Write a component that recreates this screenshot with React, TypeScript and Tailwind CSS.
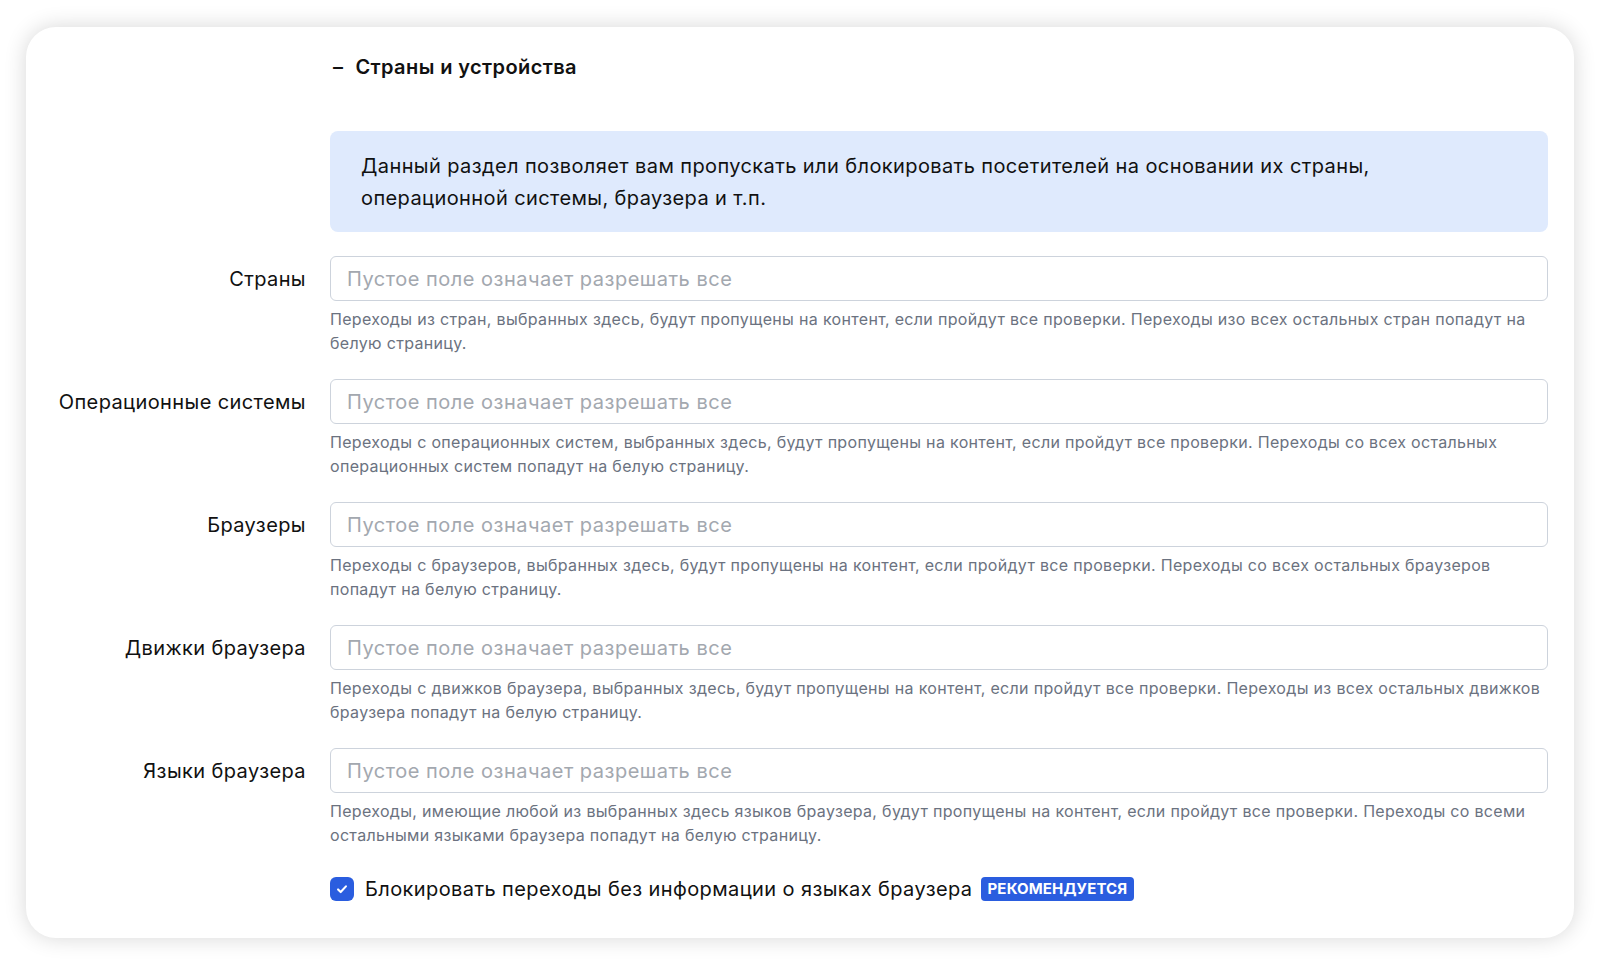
import React, { useState } from 'react';

const fields = [
  {
    label: 'Страны',
    help: 'Переходы из стран, выбранных здесь, будут пропущены на контент, если пройдут все проверки. Переходы изо всех остальных стран попадут на белую страницу.',
  },
  {
    label: 'Операционные системы',
    help: 'Переходы с операционных систем, выбранных здесь, будут пропущены на контент, если пройдут все проверки. Переходы со всех остальных операционных систем попадут на белую страницу.',
  },
  {
    label: 'Браузеры',
    help: 'Переходы с браузеров, выбранных здесь, будут пропущены на контент, если пройдут все проверки. Переходы со всех остальных браузеров попадут на белую страницу.',
  },
  {
    label: 'Движки браузера',
    help: 'Переходы с движков браузера, выбранных здесь, будут пропущены на контент, если пройдут все проверки. Переходы из всех остальных движков браузера попадут на белую страницу.',
  },
  {
    label: 'Языки браузера',
    help: 'Переходы, имеющие любой из выбранных здесь языков браузера, будут пропущены на контент, если пройдут все проверки. Переходы со всеми остальными языками браузера попадут на белую страницу.',
  },
];

const App: React.FC = () => {
  const [blockNoLang, setBlockNoLang] = useState(true);

  return (
    <div className="h-[966px] bg-white px-[26px] pt-[27px] font-['Inter',sans-serif] tracking-[0.025em] text-[#111]">
      <div className="rounded-[30px] bg-white pl-4 pr-[26px] pt-[26px] pb-[35px] shadow-[0_0_22px_rgba(0,0,0,0.16)]">
        <div className="grid grid-cols-[264px_1fr] gap-x-6">
          <div />
          <h2 className="flex items-center gap-3 text-[20px] font-semibold leading-7">
            <span className="pl-[3px]">–</span>
            <span>Страны и устройства</span>
          </h2>

          <div />
          <div className="mt-[50px] mb-6 rounded-lg bg-[#dfeafd] pl-[31px] pr-6 pt-[19px] pb-[18px] text-[20px] leading-8">
            Данный раздел позволяет вам пропускать или блокировать посетителей на основании их страны,
            <br />
            операционной системы, браузера и т.п.
          </div>

          {fields.map((f, i) => (
            <React.Fragment key={f.label}>
              <label className={`flex h-[45px] items-center justify-end text-[20px] ${i > 0 ? 'mt-6' : ''}`}>
                {f.label}
              </label>
              <div className={i > 0 ? 'mt-6' : ''}>
                <input
                  type="text"
                  placeholder="Пустое поле означает разрешать все"
                  className="h-[45px] w-full rounded-md border border-[#cdd3dc] px-4 text-[20px] tracking-[0.025em] outline-none placeholder:text-[#a3a8af]"
                />
                <p className="mt-1.5 text-[16px] leading-6 tracking-[0.02em] text-[#6b7280]">{f.help}</p>
              </div>
            </React.Fragment>
          ))}

          <div />
          <label className="mt-[28px] flex h-7 cursor-pointer items-center text-[20px]">
            <span
              onClick={() => setBlockNoLang(!blockNoLang)}
              className={`mr-[11px] flex h-6 w-6 items-center justify-center rounded-md ${blockNoLang ? 'bg-[#2a5ddf]' : 'border border-[#cdd3dc] bg-white'}`}
            >
              {blockNoLang && (
                <svg width="14" height="14" viewBox="0 0 16 16" fill="none">
                  <path d="M3.5 8.5l3 3 6-6.5" stroke="white" strokeWidth="2.4" strokeLinecap="round" strokeLinejoin="round" />
                </svg>
              )}
            </span>
            <span>Блокировать переходы без информации о языках браузера</span>
            <span className="ml-2 rounded-[4px] bg-[#2a5ddf] px-[7px] py-0.5 text-[15px] font-bold leading-5 tracking-[0.01em] text-white">
              РЕКОМЕНДУЕТСЯ
            </span>
          </label>
        </div>
      </div>
    </div>
  );
};

export default App;
